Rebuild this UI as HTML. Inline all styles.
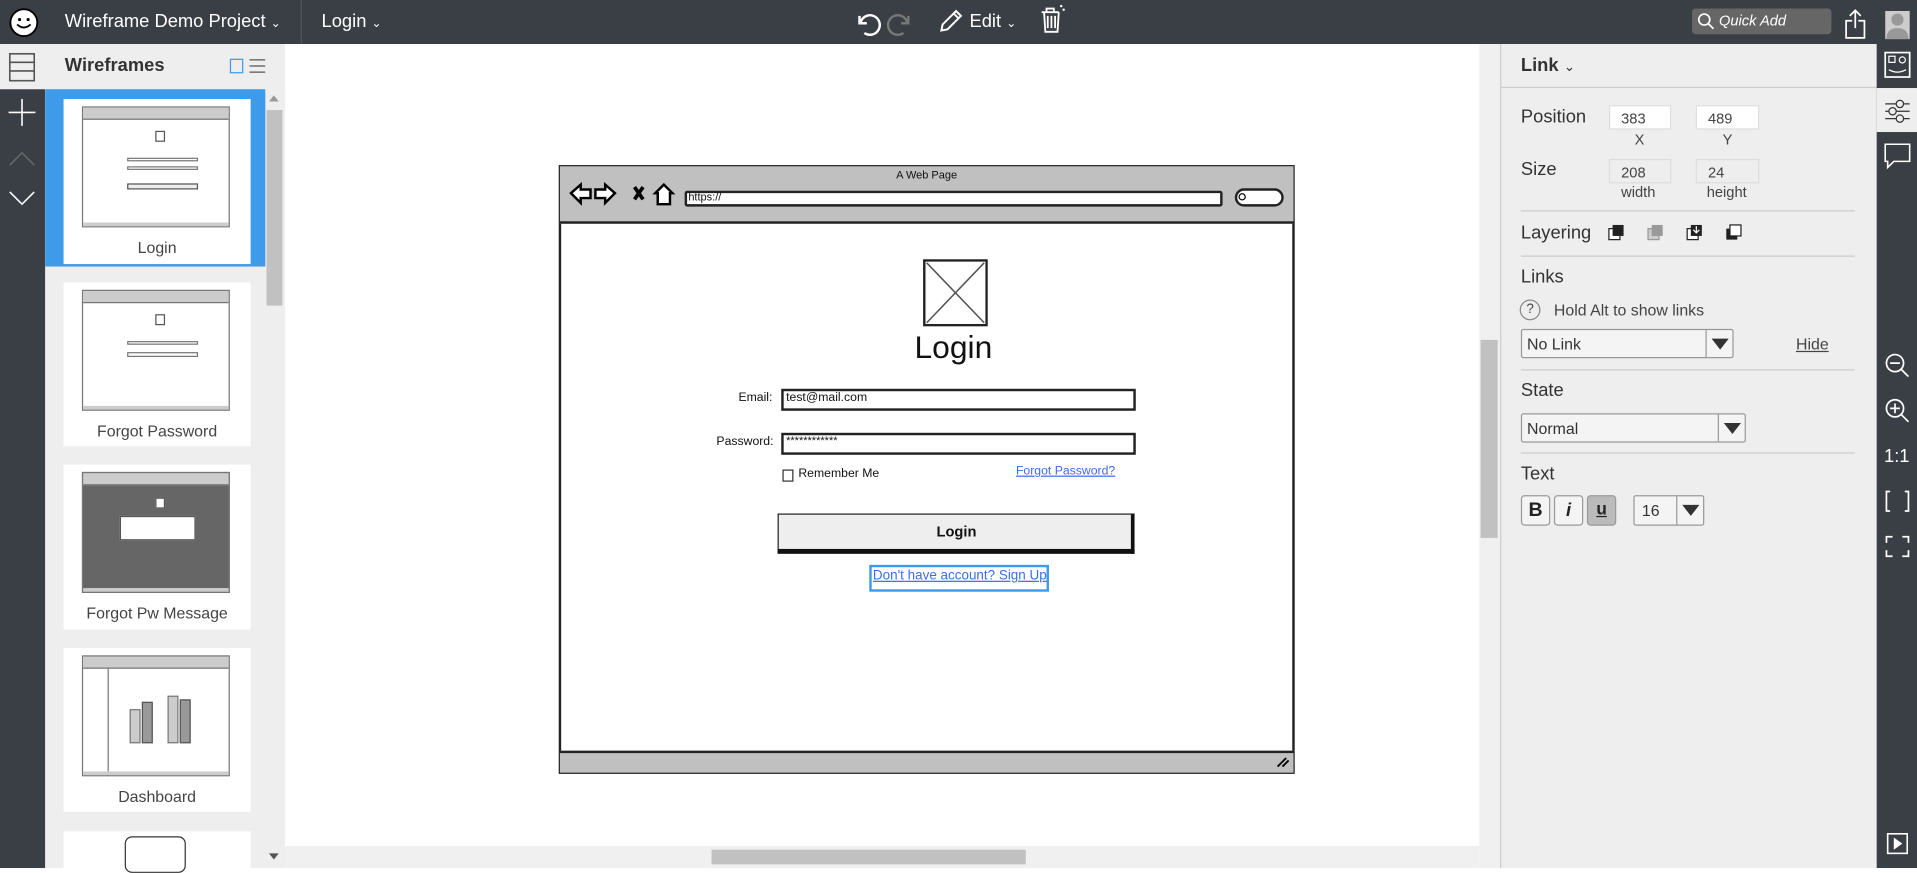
<!DOCTYPE html>
<html><head><meta charset="utf-8"><style>
*{box-sizing:border-box;margin:0;padding:0}
html,body{width:1917px;height:868px;overflow:hidden;background:#fff;font-family:"Liberation Sans",sans-serif}
#w{position:absolute;left:0;top:0;width:1568px;height:710px;transform:scale(1.22258);transform-origin:0 0}
.a{position:absolute}
.dk{background:#3a3f46}
.t{position:absolute;white-space:nowrap}
.lbl{font-size:15px;color:#333}
.inp{position:absolute;background:#fff;border:1px solid #ddd;font-size:12px;color:#444;padding:3px 0 0 9px}
.hr{position:absolute;left:1244px;width:273px;height:1px;background:#ccc}
.sel{position:absolute;background:#f4f4f4;border:1px solid #999;border-radius:2px;font-size:13px;color:#333;padding:4px 0 0 4px}
.sel i{position:absolute;right:0;top:0;bottom:0;width:22px;border-left:1px solid #999}
.sel i:after{content:"";position:absolute;left:4px;top:7px;border-left:7px solid transparent;border-right:7px solid transparent;border-top:9px solid #333}
.card{position:absolute;left:52px;width:153px;background:#fff}
.card .th{position:absolute;left:15px;top:6px;width:121px;height:99px;border:1px solid #777;background:#fff}
.card .th:before{content:"";position:absolute;left:0;right:0;top:0;height:9px;background:#ccc;border-bottom:1px solid #777}
.card .th:after{content:"";position:absolute;left:0;right:0;bottom:0;height:3px;background:#ccc}
.card .n{position:absolute;left:0;right:0;text-align:center;font-size:13px;color:#444}
.hd{font-family:"Liberation Sans",sans-serif;color:#111}
</style></head><body><div id="w">
<div class="a dk" style="left:0;top:0;width:1568px;height:36px"></div>
<svg class="a" style="left:7px;top:6px" width="25" height="25" viewBox="0 0 25 25"><circle cx="12.5" cy="12.5" r="11" fill="#fff" stroke="#000" stroke-width="1.5"/><circle cx="9" cy="10" r="1.3"/><circle cx="16" cy="10" r="1.3"/><path d="M7 14q5.5 5 11 0" fill="none" stroke="#000" stroke-width="1.5"/></svg>
<div class="t" style="left:53px;top:9px;font-size:15px;color:#fff">Wireframe Demo Project <span style="font-size:10px">⌄</span></div>
<div class="a" style="left:246px;top:0;width:1px;height:36px;background:#555"></div>
<div class="t" style="left:263px;top:9px;font-size:15px;color:#fff">Login <span style="font-size:10px">⌄</span></div>
<svg class="a" style="left:697px;top:5px" width="52" height="26" viewBox="0 0 52 26"><path d="M6 8v6h6M7 13a8 8 0 1 1 3 9" fill="none" stroke="#fff" stroke-width="2"/><path d="M46 8v6h-6M45 13a8 8 0 1 0-3 9" fill="none" stroke="#777" stroke-width="2"/></svg>
<svg class="a" style="left:767px;top:6px" width="22" height="22" viewBox="0 0 22 22"><path d="M3 19l1-5 11-11 4 4-11 11zM13 5l4 4" fill="none" stroke="#fff" stroke-width="1.6"/></svg>
<div class="t" style="left:793px;top:9px;font-size:15px;color:#fff">Edit <span style="font-size:10px">⌄</span></div>
<svg class="a" style="left:849px;top:2px" width="24" height="26" viewBox="0 0 24 26"><path d="M3 8h14M5 8l1 16h10l1-16M8 11v10M11 11v10M14 11v10M7 8V5h6v3" fill="none" stroke="#fff" stroke-width="1.5"/><circle cx="19" cy="3" r="1" fill="#fff"/><circle cx="21" cy="6" r="1" fill="#fff"/></svg>
<div class="a" style="left:1384px;top:7px;width:114px;height:21px;background:#666;border-radius:3px"></div>
<svg class="a" style="left:1388px;top:10px" width="15" height="15" viewBox="0 0 15 15"><circle cx="6" cy="6" r="4.5" fill="none" stroke="#fff" stroke-width="1.4"/><path d="M9.5 9.5l4 4" stroke="#fff" stroke-width="1.4"/></svg>
<div class="t" style="left:1406px;top:10px;font-size:12px;color:#fff;font-style:italic">Quick Add</div>
<svg class="a" style="left:1508px;top:7px" width="20" height="26" viewBox="0 0 20 26"><path d="M7 10H2v14h15V10h-5M9.5 2v14M5 6l4.5-4.5L14 6" fill="none" stroke="#fff" stroke-width="1.4"/></svg>
<div class="a" style="left:1542px;top:9px;width:20px;height:23px;background:#ccc"></div>
<svg class="a" style="left:1542px;top:9px" width="20" height="23" viewBox="0 0 20 23"><circle cx="10" cy="7" r="5" fill="#999"/><path d="M1 23q0-9 9-9t9 9z" fill="#999"/></svg>
<div class="a" style="left:0;top:36px;width:233px;height:37px;background:#eee"></div>
<div class="a dk" style="left:0;top:73px;width:37px;height:637px"></div>
<svg class="a" style="left:7px;top:43px" width="22" height="24" viewBox="0 0 22 24"><rect x="1" y="1" width="20" height="22" fill="none" stroke="#555" stroke-width="1.3"/><path d="M1 8h20M1 15h20" stroke="#555" stroke-width="1.3"/></svg>
<svg class="a" style="left:7px;top:80px" width="22" height="100" viewBox="0 0 22 100"><path d="M11 1v22M0 12h22" stroke="#fff" stroke-width="1.3"/><path d="M1 55l10-10 10 10" fill="none" stroke="#666" stroke-width="1.3"/><path d="M1 77l10 10 10-10" fill="none" stroke="#fff" stroke-width="1.3"/></svg>
<div class="a" style="left:37px;top:73px;width:196px;height:637px;background:#eee"></div>
<div class="t" style="left:53px;top:45px;font-size:15px;font-weight:bold;color:#333">Wireframes</div>
<div class="a" style="left:188px;top:48px;width:11px;height:12px;border:1.5px solid #3d9be9"></div>
<svg class="a" style="left:204px;top:47px" width="13" height="14"><path d="M0 2h13M0 7h13M0 12h13" stroke="#555"/></svg>
<div class="a" style="left:217px;top:73px;width:16px;height:637px;background:#eee"></div>
<div class="a" style="left:218px;top:90px;width:13px;height:160px;background:#c1c1c1"></div>
<div class="a" style="left:220px;top:78px;border-left:4px solid transparent;border-right:4px solid transparent;border-bottom:5px solid #999"></div>
<div class="a" style="left:220px;top:698px;border-left:4px solid transparent;border-right:4px solid transparent;border-top:5px solid #555"></div>
<div class="a" style="left:37px;top:73px;width:180px;height:145px;background:#3d9be9"></div>
<div class="card" style="top:81px;height:135px"><div class="th"><div class="a" style="left:59px;top:19px;width:8px;height:9px;border:1px solid #555"></div><div class="a" style="left:36px;top:41px;width:58px;height:3px;border:1px solid #777"></div><div class="a" style="left:36px;top:48px;width:58px;height:3px;border:1px solid #777"></div><div class="a" style="left:36px;top:62px;width:58px;height:5px;border:1px solid #555;background:#eee"></div></div><div class="n" style="top:114px">Login</div></div>
<div class="card" style="top:231px;height:134px"><div class="th"><div class="a" style="left:59px;top:19px;width:8px;height:9px;border:1px solid #555"></div><div class="a" style="left:36px;top:41px;width:58px;height:3px;border:1px solid #777"></div><div class="a" style="left:36px;top:50px;width:58px;height:4px;border:1px solid #777"></div></div><div class="n" style="top:114px">Forgot Password</div></div>
<div class="card" style="top:380px;height:135px"><div class="th" style="background:#666"><div class="a" style="left:30px;top:35px;width:62px;height:20px;background:#fff;border:1px solid #555"></div><div class="a" style="left:59px;top:20px;width:8px;height:9px;border:1px solid #555;background:#fff"></div></div><div class="n" style="top:114px">Forgot Pw Message</div></div>
<div class="card" style="top:530px;height:134px"><div class="th"><div class="a" style="left:20px;top:10px;width:1px;height:88px;background:#777"></div><div class="a" style="left:38px;top:43px;width:9px;height:28px;background:#ccc;border:1px solid #777"></div><div class="a" style="left:48px;top:37px;width:9px;height:34px;background:#999;border:1px solid #555"></div><div class="a" style="left:69px;top:32px;width:9px;height:39px;background:#ccc;border:1px solid #777"></div><div class="a" style="left:79px;top:35px;width:9px;height:36px;background:#999;border:1px solid #555"></div></div><div class="n" style="top:114px">Dashboard</div></div>
<div class="card" style="top:680px;height:30px"><div class="a" style="left:50px;top:4px;width:50px;height:30px;border:1.5px solid #333;border-radius:6px"></div></div>
<div class="a" style="left:233px;top:692px;width:977px;height:18px;background:#f0f0f0"></div>
<div class="a" style="left:582px;top:695px;width:257px;height:12px;background:#c1c1c1"></div>
<div class="a" style="left:1210px;top:36px;width:17px;height:674px;background:#f0f0f0"></div>
<div class="a" style="left:1211px;top:278px;width:14px;height:162px;background:#c1c1c1"></div>
<div class="a" style="left:457px;top:135px;width:602px;height:498px;border:2px solid #222;background:#fff"></div>
<div class="a" style="left:458px;top:136px;width:600px;height:47px;background:#c0c0c0;border-bottom:2px solid #222"></div>
<div class="a" style="left:458px;top:614px;width:600px;height:18px;background:#c0c0c0;border-top:2px solid #222"></div>
<div class="t hd" style="left:733px;top:138px;font-size:9px">A Web Page</div>
<svg class="a" style="left:465px;top:149px" width="90" height="20" viewBox="0 0 90 20"><path d="M2 9l8-7v4h8v7h-8v4z" fill="#fff" stroke="#000" stroke-width="2"/><path d="M34 9l-8-7v4h-8v7h8v4z" transform="translate(4 0)" fill="#fff" stroke="#000" stroke-width="2"/><path d="M54 4l7 10M61 4l-7 10" stroke="#000" stroke-width="3"/><path d="M71 9l7-7 7 7h-2v9h-10v-9z" fill="#fff" stroke="#000" stroke-width="2"/></svg>
<div class="a" style="left:560px;top:156px;width:440px;height:13px;background:#fff;border:2px solid #222;border-radius:2px"></div>
<div class="t hd" style="left:563px;top:156px;font-size:9px">https://</div>
<div class="a" style="left:1010px;top:154px;width:40px;height:15px;background:#fff;border:2px solid #222;border-radius:8px"></div>
<div class="a" style="left:1013px;top:158px;width:6px;height:6px;border:1.5px solid #000;border-radius:50%"></div>
<svg class="a" style="left:1043px;top:618px" width="12" height="10"><path d="M2 9l7-7M6 9l5-5" stroke="#000" stroke-width="1.5"/></svg>
<svg class="a" style="left:755px;top:212px" width="53" height="55" viewBox="0 0 53 55"><rect x="1" y="1" width="51" height="53" fill="#fff" stroke="#222" stroke-width="2"/><path d="M3 3l47 49M50 3L3 52" stroke="#555" stroke-width="1.3"/></svg>
<div class="t hd" style="left:748px;top:269px;font-size:26px">Login</div>
<div class="t hd" style="left:604px;top:320px;font-size:10px">Email:</div>
<div class="a" style="left:639px;top:318px;width:290px;height:18px;border:2px solid #222;background:#fff"></div>
<div class="t hd" style="left:643px;top:320px;font-size:10px">test@mail.com</div>
<div class="t hd" style="left:586px;top:356px;font-size:10px">Password:</div>
<div class="a" style="left:639px;top:354px;width:290px;height:18px;border:2px solid #222;background:#fff"></div>
<div class="t hd" style="left:643px;top:355px;font-size:9px">************</div>
<div class="a" style="left:640px;top:384px;width:9px;height:10px;border:1.5px solid #333"></div>
<div class="t hd" style="left:653px;top:382px;font-size:10px">Remember Me</div>
<div class="t" style="left:831px;top:380px;font-size:10px;color:#3b6ee8;text-decoration:underline">Forgot Password?</div>
<div class="a" style="left:636px;top:420px;width:292px;height:33px;background:#eee;border:1.5px solid #222;border-right:3px solid #111;border-bottom:4px solid #111"></div>
<div class="t hd" style="left:766px;top:428px;font-size:12px;font-weight:bold">Login</div>
<div class="a" style="left:711px;top:462px;width:147px;height:22px;border:2px solid #3d9be9"></div>
<div class="t" style="left:714px;top:465px;font-size:11px;color:#3b6ee8;text-decoration:underline">Don't have account? Sign Up</div>
<div class="a" style="left:1227px;top:36px;width:308px;height:674px;background:#eee;border-left:1px solid #ccc"></div>
<div class="a" style="left:1228px;top:71px;width:307px;height:1px;background:#ccc"></div>
<div class="t" style="left:1244px;top:45px;font-size:15px;font-weight:bold;color:#333">Link <span style="font-weight:normal;font-size:11px">⌄</span></div>
<div class="t lbl" style="left:1244px;top:87px">Position</div>
<div class="inp" style="left:1316px;top:86px;width:51px;height:20px">383</div>
<div class="inp" style="left:1387px;top:86px;width:52px;height:20px">489</div>
<div class="t" style="left:1337px;top:107px;font-size:12px;color:#444">X</div>
<div class="t" style="left:1409px;top:107px;font-size:12px;color:#444">Y</div>
<div class="t lbl" style="left:1244px;top:130px">Size</div>
<div class="inp" style="left:1316px;top:130px;width:51px;height:20px;background:#eee">208</div>
<div class="inp" style="left:1387px;top:130px;width:52px;height:20px;background:#eee">24</div>
<div class="t" style="left:1326px;top:150px;font-size:12px;color:#444">width</div>
<div class="t" style="left:1396px;top:150px;font-size:12px;color:#444">height</div>
<div class="hr" style="top:172px"></div>
<div class="t lbl" style="left:1244px;top:182px">Layering</div>
<svg class="a" style="left:1315px;top:183px" width="115" height="15" viewBox="0 0 115 15"><rect x="1" y="4" width="9" height="9" fill="#fff" stroke="#222"/><rect x="4" y="1" width="9" height="9" fill="#222"/><rect x="33" y="4" width="9" height="9" fill="#ccc" stroke="#999"/><rect x="36" y="1" width="9" height="9" fill="#999"/><rect x="65" y="4" width="9" height="9" fill="#fff" stroke="#222"/><rect x="68" y="1" width="9" height="9" fill="#222"/><path d="M72.5 2v5M70 5l2.5 2.5L75 5" stroke="#fff" fill="none"/><rect x="97" y="4" width="9" height="9" fill="#222"/><rect x="100" y="1" width="9" height="9" fill="#fff" stroke="#222"/></svg>
<div class="hr" style="top:209px"></div>
<div class="t lbl" style="left:1244px;top:218px">Links</div>
<div class="a" style="left:1243px;top:245px;width:17px;height:17px;border:1px solid #888;border-radius:50%;font-size:11px;text-align:center;color:#444;line-height:15px">?</div>
<div class="t" style="left:1271px;top:246px;font-size:13px;color:#444">Hold Alt to show links</div>
<div class="sel" style="left:1244px;top:269px;width:174px;height:24px">No Link<i></i></div>
<div class="t" style="left:1469px;top:274px;font-size:13px;color:#444;text-decoration:underline">Hide</div>
<div class="hr" style="top:302px"></div>
<div class="t lbl" style="left:1244px;top:311px">State</div>
<div class="sel" style="left:1244px;top:338px;width:184px;height:24px">Normal<i></i></div>
<div class="hr" style="top:370px"></div>
<div class="t lbl" style="left:1244px;top:379px">Text</div>
<div class="a" style="left:1244px;top:405px;width:24px;height:25px;border:1px solid #999;border-radius:3px;background:#f4f4f4;font-weight:bold;font-size:16px;text-align:center;line-height:23px;color:#222">B</div>
<div class="a" style="left:1271px;top:405px;width:24px;height:25px;border:1px solid #999;border-radius:3px;background:#f4f4f4;font-style:italic;font-weight:bold;font-size:15px;text-align:center;line-height:23px;color:#222">i</div>
<div class="a" style="left:1298px;top:405px;width:24px;height:25px;border:1px solid #999;border-radius:3px;background:#bbb;font-weight:bold;font-size:14px;text-align:center;line-height:20px;color:#222;text-decoration:underline">u</div>
<div class="sel" style="left:1336px;top:405px;width:58px;height:25px;padding-left:6px">16<i></i></div>
<div class="a dk" style="left:1535px;top:36px;width:33px;height:674px"></div>
<div class="a" style="left:1535px;top:72px;width:33px;height:36px;background:#eee"></div>
<svg class="a" style="left:1541px;top:42px" width="22" height="24" viewBox="0 0 22 24"><rect x="1" y="1" width="20" height="20" fill="none" stroke="#fff" stroke-width="1.4"/><rect x="4" y="4" width="5" height="5" fill="none" stroke="#fff"/><circle cx="15" cy="7" r="2.5" fill="none" stroke="#fff"/><path d="M4 15q7 4 14 0" fill="none" stroke="#fff"/></svg>
<svg class="a" style="left:1541px;top:80px" width="22" height="22" viewBox="0 0 22 22"><path d="M1 5h20M1 11h20M1 17h20" stroke="#333"/><circle cx="13" cy="5" r="3" fill="#eee" stroke="#333"/><circle cx="7" cy="11" r="3" fill="#eee" stroke="#333"/><circle cx="13" cy="17" r="3" fill="#eee" stroke="#333"/></svg>
<svg class="a" style="left:1541px;top:117px" width="22" height="22" viewBox="0 0 22 22"><path d="M1 1h20v14H8l-5 5v-5H1z" fill="none" stroke="#fff" stroke-width="1.3"/></svg>
<svg class="a" style="left:1541px;top:288px" width="22" height="180" viewBox="0 0 22 180"><circle cx="9" cy="9" r="7" fill="none" stroke="#fff" stroke-width="1.4"/><path d="M5 9h8M14 14l6 6" stroke="#fff" stroke-width="1.4"/><circle cx="9" cy="46" r="7" fill="none" stroke="#fff" stroke-width="1.4"/><path d="M5 46h8M9 42v8M14 51l6 6" stroke="#fff" stroke-width="1.4"/><path d="M5 114h-3v16h3M17 114h3v16h-3" fill="none" stroke="#fff" stroke-width="1.4"/><path d="M2 156v-5h5M15 151h5v5M20 162v5h-5M7 167H2v-5" fill="none" stroke="#fff" stroke-width="1.4"/></svg>
<div class="t" style="left:1541px;top:365px;font-size:15px;color:#fff">1:1</div>
<svg class="a" style="left:1543px;top:681px" width="18" height="18"><rect x="1" y="1" width="16" height="16" fill="none" stroke="#fff" stroke-width="1.3"/><path d="M6 4l7 5-7 5z" fill="#fff"/></svg>
</div></body></html>
